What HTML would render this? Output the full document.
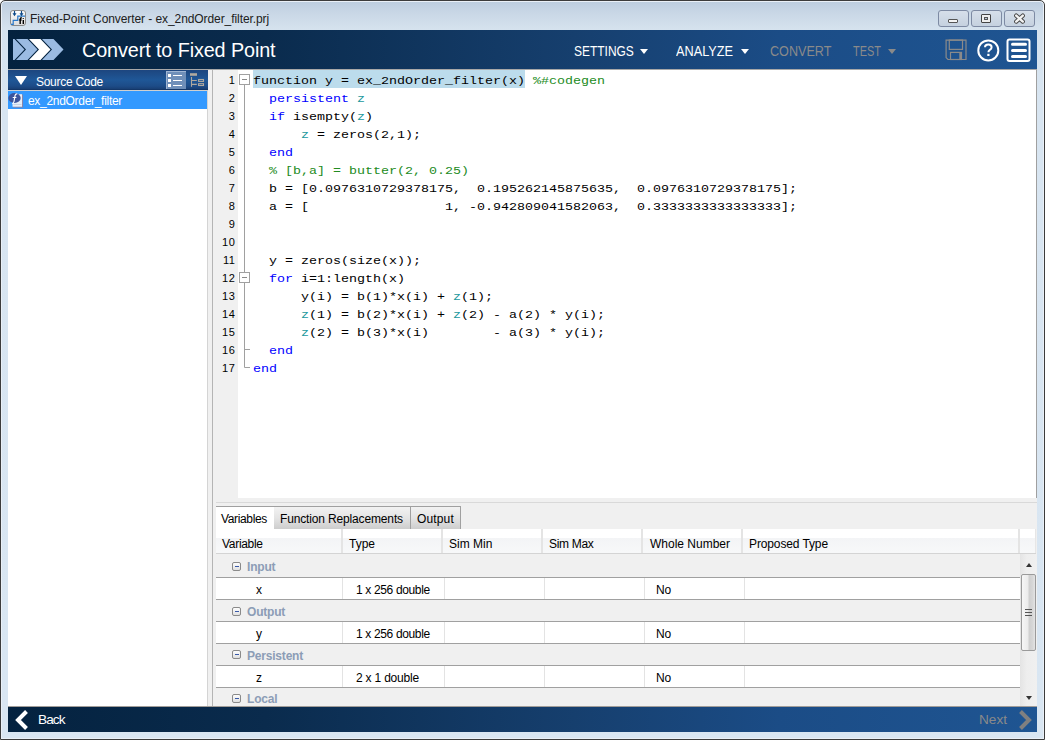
<!DOCTYPE html>
<html><head><meta charset="utf-8">
<style>
*{margin:0;padding:0;box-sizing:border-box}
html,body{width:1045px;height:740px;overflow:hidden;background:#fff}
body{position:relative;font-family:"Liberation Sans",sans-serif}
.a{position:absolute}
#frame{left:0;top:0;width:1045px;height:740px;border:1px solid #3c3c3c;border-radius:5px 5px 0 0;
 background:linear-gradient(#bccddf 0px,#c9d7e6 12px,#d5e2ee 28px,#d8e5f1 100px,#d9e6f2 740px);box-shadow:inset 0 0 0 1px #eaf0f7}
#title{left:30px;top:12px;font-size:12px;color:#202020;letter-spacing:-0.08px;white-space:nowrap}
.wb{top:10px;width:31px;height:17px;border:1px solid #7d8aa3;border-radius:3px;background:linear-gradient(#d6dfea,#c5d1df)}
#header{left:8px;top:30px;width:1029px;height:39px;background:linear-gradient(90deg,#04223f 0%,#0a2b4d 25%,#163f6e 55%,#1b4c86 75%,#1f5592 100%)}
#hdrtitle{left:82px;top:38.5px;font-size:19.8px;color:#fff;white-space:nowrap;letter-spacing:-0.1px}
.menu{top:42.6px;font-size:14px;color:#fff;white-space:nowrap;transform-origin:0 0}
.menu.dis{color:#8a8a8a}
.tri{width:0;height:0;border-left:4px solid transparent;border-right:4px solid transparent;border-top:5px solid #fff}
#hline{left:8px;top:69px;width:1029px;height:1px;background:#a8a8a8}
#left{left:8px;top:70px;width:200px;height:636px;background:#fff;border-right:1px solid #d4d4d4}
#srchdr{left:8px;top:70px;width:200px;height:20px;background:linear-gradient(#1d467f 0%,#1f5797 50%,#1d4c88 80%,#183f74 95%,#0f2f5e 100%)}
#selrow{left:8px;top:91px;width:199px;height:18px;background:#3399ff}
#split{left:208px;top:70px;width:5px;height:636px;background:#f0f0f0}
#gutter{left:212px;top:70px;width:26px;height:428px;background:#f0f0f0;border-left:1px solid #b4b4b4}
#editor{left:238px;top:70px;width:799px;height:428px;background:#fff;border-right:1px solid #a0a0a0}
#code{left:253px;top:72px;font-family:"Liberation Mono",monospace;font-size:11.5px;letter-spacing:0px;transform:scaleX(1.15942);transform-origin:0 0;line-height:18px;white-space:pre;color:#000}
#nums{left:213px;top:71px;width:22.5px;font-family:"Liberation Sans",sans-serif;font-size:11px;line-height:18px;text-align:right;color:#000;letter-spacing:0.6px}
.kw{color:#0000ff}.vr{color:#20999d}.cm{color:#228b22}
#hl{left:253px;top:70px;width:272px;height:18px;background:#bcdcec}
#footer{left:8px;top:706px;width:1029px;height:26px;border-top:1px solid #a19d99;background:linear-gradient(90deg,#04223f 0%,#0a2b4d 25%,#163f6e 55%,#1b4c86 75%,#1f5592 100%)}

.tab{top:506px;height:23px;font-size:12px;color:#000;letter-spacing:-0.3px;white-space:nowrap;padding:5px 0 0 5px;border-top:1px solid #a0a0a0;border-right:1px solid #a0a0a0;background:linear-gradient(#f2f2f2,#e4e4e4 50%,#cdcdcd)}
.tab.sel{background:#fff;border-right:0}
.th{top:529px;height:24px;font-size:12px;color:#000;letter-spacing:0px;white-space:nowrap;padding:8px 0 0 6px;background:linear-gradient(#fff 0,#fff 9px,#f3f4f6 9px,#f7f8f9 23px);border-right:2px solid #e4e4e4}
.grp{left:216px;width:804px;height:22px;background:#f0f0f0;border-bottom:1px solid #a0a0a0;font-size:12px;font-weight:bold;color:#8c9db6;padding:6px 0 0 31px;letter-spacing:-0.2px}
.mb{position:absolute;left:16px;top:8px;width:9px;height:9px;border:1px solid #8a8a8a;border-radius:2px;background:linear-gradient(#fdfdfd,#e0e0e0)}
.mb:after{content:"";position:absolute;left:1.5px;top:3px;width:4px;height:1px;background:#3a5aa8}
.row{left:216px;width:804px;height:22px;background:#fff;border-bottom:1px solid #a0a0a0;display:flex}
.c{height:21px;font-size:12px;color:#000;padding-top:4.5px;border-right:1px solid #e3e3e3;white-space:nowrap;letter-spacing:-0.2px}
</style></head><body>
<div id="frame" class="a"></div>
<div id="title" class="a">Fixed-Point Converter - ex_2ndOrder_filter.prj</div>
<div class="a wb" style="left:938px"></div>
<div class="a wb" style="left:971px"></div>
<div class="a wb" style="left:1004px"></div>

<div id="header" class="a"></div>
<div id="hdrtitle" class="a">Convert to Fixed Point</div>
<div class="a menu" style="left:574px;transform:scaleX(0.855)">SETTINGS</div>
<div class="a menu" style="left:676px;transform:scaleX(0.91)">ANALYZE</div>
<div class="a menu dis" style="left:770px;transform:scaleX(0.9)">CONVERT</div>
<div class="a menu dis" style="left:853px;transform:scaleX(0.78)">TEST</div>
<div id="hline" class="a"></div>

<div id="left" class="a"></div>
<div id="srchdr" class="a"></div>
<div id="selrow" class="a"></div>
<div id="split" class="a"></div>
<div id="gutter" class="a"></div>
<div id="editor" class="a"></div>
<div id="hl" class="a"></div>
<div id="code" class="a">function y = ex_2ndOrder_filter(x) <span class="cm">%#codegen</span>
  <span class="kw">persistent</span> <span class="vr">z</span>
  <span class="kw">if</span> isempty(<span class="vr">z</span>)
      <span class="vr">z</span> = zeros(2,1);
  <span class="kw">end</span>
  <span class="cm">% [b,a] = butter(2, 0.25)</span>
  b = [0.0976310729378175,  0.195262145875635,  0.0976310729378175];
  a = [                 1, -0.942809041582063,  0.3333333333333333];


  y = zeros(size(x));
  <span class="kw">for</span> i=1:length(x)
      y(i) = b(1)*x(i) + <span class="vr">z</span>(1);
      <span class="vr">z</span>(1) = b(2)*x(i) + <span class="vr">z</span>(2) - a(2) * y(i);
      <span class="vr">z</span>(2) = b(3)*x(i)        - a(3) * y(i);
  <span class="kw">end</span>
<span class="kw">end</span></div>
<div id="nums" class="a">1<br>2<br>3<br>4<br>5<br>6<br>7<br>8<br>9<br>10<br>11<br>12<br>13<br>14<br>15<br>16<br>17</div>
<svg class="a" style="left:238px;top:70px" width="15" height="310">
<path d="M6.5 15V297.5H12M6.5 279.5H12" stroke="#a0a0a0" fill="none"/>
<rect x="1.5" y="4.5" width="10" height="10" fill="#fff" stroke="#a0a0a0"/>
<path d="M4 9.5H9" stroke="#8a8a8a"/>
<rect x="1.5" y="202.5" width="10" height="10" fill="#fff" stroke="#a0a0a0"/>
<path d="M4 207.5H9" stroke="#8a8a8a"/>
</svg>
<div id="footer" class="a"></div>

<!-- title icon -->
<svg class="a" style="left:10px;top:10px" width="16" height="16">
<defs><linearGradient id="ig" x1="0" y1="0" x2="0" y2="1"><stop offset="0" stop-color="#ffffff"/><stop offset="1" stop-color="#dcdcdc"/></linearGradient></defs>
<rect x="0.5" y="0.5" width="15" height="15" rx="2.5" fill="url(#ig)" stroke="#8a8a8a"/>
<path d="M1 14.3H3.2V10.3H7.8V6.2H15" stroke="#2a78c8" stroke-width="1.2" fill="none"/>
<path d="M4.5 1V4M11.5 1V4" stroke="#0d4a8a" stroke-width="1.2"/><path d="M2.5 3.3H6.5L4.5 6.3ZM9.5 3.3H13.5L11.5 6.3Z" fill="#0d4a8a"/>
<path d="M10.2 14V9.2Q10.2 7.8 11.8 7.8M9.2 10H11.6M13.3 10V14M13.3 8.2V9" stroke="#000" stroke-width="1.4" fill="none"/>
</svg>
<!-- window buttons glyphs -->
<div class="a" style="left:948px;top:19px;width:10px;height:4px;background:#f4f4f4;border:1px solid #555;border-radius:1px"></div>
<div class="a" style="left:981px;top:14px;width:10px;height:9px;background:#eee;border:1px solid #444;border-radius:1px"></div>
<div class="a" style="left:984px;top:17px;width:4px;height:3px;background:#b9c6d6;border:1px solid #555"></div>
<svg class="a" style="left:1013px;top:13px" width="13" height="11"><path d="M3.2 2.6L9.8 8.6M9.8 2.6L3.2 8.6" stroke="#454545" stroke-width="4.2" stroke-linecap="round"/><path d="M3.2 2.6L9.8 8.6M9.8 2.6L3.2 8.6" stroke="#f2f2f2" stroke-width="2.4" stroke-linecap="round"/></svg>

<!-- header logo -->
<svg class="a" style="left:8px;top:30px" width="60" height="39">
<g transform="translate(-8,-30)">
<polygon points="13,39 14.5,39 24.5,49.5 14.5,60 13,60" fill="#9bbbe2"/>
<polygon points="16,39 27.5,39 37.5,49.5 27.5,60 16,60 26,49.5" fill="#9bbbe2"/>
<polygon points="29,39 40.5,39 50.5,49.5 40.5,60 29,60 39,49.5" fill="#ffffff"/>
<polygon points="42,39 53.5,39 63.5,49.5 53.5,60 42,60 52,49.5" fill="#9bbbe2"/>
</g></svg>
<div class="a tri" style="left:640px;top:49px"></div>
<div class="a tri" style="left:741px;top:49px"></div>
<div class="a tri" style="left:888px;top:49px;border-top-color:#8a8a8a"></div>
<!-- save icon -->
<svg class="a" style="left:945px;top:39px" width="23" height="23">
<path d="M1.1 1.1H21V20.5H3L1.1 18.6Z" fill="none" stroke="#8a8a8a" stroke-width="1.2"/>
<rect x="4.3" y="1.1" width="13.2" height="9.3" fill="none" stroke="#8a8a8a" stroke-width="1.2"/>
<rect x="5.5" y="13.4" width="11" height="7.1" fill="none" stroke="#8a8a8a" stroke-width="1.2"/>
<rect x="14.3" y="13.4" width="2.2" height="7.1" fill="#8a8a8a"/>
</svg>
<!-- help -->
<svg class="a" style="left:976px;top:38px" width="26" height="26">
<circle cx="12.3" cy="12.4" r="10" fill="none" stroke="#fff" stroke-width="2"/>
<path d="M9 9.3Q9 6.6 12.3 6.6Q15.6 6.6 15.6 9.2Q15.6 10.8 13.8 11.8Q12.4 12.6 12.4 14.3" stroke="#fff" stroke-width="2" fill="none"/><rect x="11.3" y="15.8" width="2.2" height="2.2" fill="#fff"/>
</svg>
<!-- menu -->
<svg class="a" style="left:1006px;top:38px" width="26" height="25">
<rect x="1.5" y="1.5" width="22" height="21.5" rx="2" fill="none" stroke="#fff" stroke-width="2"/>
<path d="M6.5 6.3H19.5M6.5 12.4H19.5M6.5 18.6H19.5" stroke="#fff" stroke-width="3" stroke-linecap="round"/>
</svg>

<!-- left panel header -->
<div class="a" style="left:15px;top:76px;width:0;height:0;border-left:6px solid transparent;border-right:6px solid transparent;border-top:9px solid #fff"></div>
<div class="a" style="left:36px;top:75px;font-size:12px;color:#fff;letter-spacing:-0.28px;white-space:nowrap">Source Code</div>
<div class="a" style="left:166px;top:71px;width:20px;height:18px;background:#6f8fb9;border-left:1px solid #9fb5d3;border-top:1px solid #9fb5d3"></div>
<svg class="a" style="left:166px;top:71px" width="20" height="18">
<rect x="2" y="3" width="3" height="3" fill="#fff"/><rect x="2" y="8" width="3" height="3" fill="#fff"/><rect x="2" y="13" width="3" height="3" fill="#fff"/>
<path d="M7 4.5H16M7 9.5H16M7 14.5H16" stroke="#fff" stroke-width="1"/>
</svg>
<svg class="a" style="left:189px;top:71px" width="17" height="18">
<rect x="1" y="2.2" width="7" height="2.6" fill="#b0a99f"/>
<path d="M2.5 6V15.8M2.5 9.5H7.8M2.5 13.4H7.8" stroke="#b0a99f" stroke-width="1.1" fill="none"/>
<rect x="9.6" y="8.5" width="4.9" height="1.9" fill="none" stroke="#b0a99f" stroke-width="1.1"/>
<rect x="9.6" y="12.7" width="4.9" height="1.8" fill="none" stroke="#b0a99f" stroke-width="1.1"/>
</svg>
<div class="a" style="left:8px;top:90px;width:200px;height:1px;background:#d0d0d0"></div>
<!-- selected row -->
<svg class="a" style="left:8px;top:91px" width="16" height="18">
<rect x="5" y="3.6" width="10" height="13" fill="#8a86a8"/>
<rect x="4.5" y="3.2" width="9.5" height="12.5" fill="#e6eef8"/>
<path d="M5.5 13.5H13.5" stroke="#c8d4e4" stroke-width="1"/>
<ellipse cx="6.5" cy="7" rx="6.2" ry="5.1" fill="#3d559c"/>
<path d="M4.2 12.5Q5.6 12.5 6 10.5L7.1 4.3Q7.5 2.6 9.3 2.8M4.7 6.5H8.4" stroke="#fff" stroke-width="1.2" fill="none"/>
</svg>
<div class="a" style="left:28px;top:94px;font-size:12px;color:#fff;letter-spacing:-0.3px;white-space:nowrap">ex_2ndOrder_filter</div>


<!-- bottom panel -->
<div class="a" style="left:213px;top:498px;width:824px;height:208px;background:#f0f0f0"></div><div class="a" style="left:212px;top:498px;width:1px;height:208px;background:#b4b4b4"></div>
<div class="a" style="left:216px;top:502px;width:821px;height:1px;background:#d9d9d9"></div>

<div class="a tab sel" style="left:216px;width:58px;letter-spacing:-0.35px">Variables</div>
<div class="a tab" style="left:274px;width:137px;letter-spacing:-0.15px;padding-left:6px">Function Replacements</div>
<div class="a tab" style="left:411px;width:50px;letter-spacing:0.15px;padding-left:6px">Output</div>
<div class="a th" style="left:216px;width:127px;letter-spacing:-0.3px">Variable</div>
<div class="a th" style="left:343px;width:100px">Type</div>
<div class="a th" style="left:443px;width:100px">Sim Min</div>
<div class="a th" style="left:543px;width:100px;letter-spacing:-0.3px">Sim Max</div>
<div class="a th" style="left:643px;width:100px;padding-left:7px">Whole Number</div>
<div class="a th" style="left:743px;width:277px;letter-spacing:-0.12px">Proposed Type</div>
<div class="a th" style="left:1020px;width:16px;border-right:1px solid #e6e6e6"></div>
<div class="a" style="left:216px;top:553px;width:820px;height:1px;background:#d4d4d4"></div>

<div class="a grp" style="top:554px;height:24px"><span class="mb"></span>Input</div>
<div class="a row" style="top:578px"><div class="c" style="width:127px;padding-left:40px">x</div><div class="c" style="width:102px;padding-left:13px;letter-spacing:-0.35px">1 x 256 double</div><div class="c" style="width:100px"></div><div class="c" style="width:100px"></div><div class="c" style="width:100px;padding-left:11px">No</div><div class="c" style="width:275px;border-right:0"></div></div>
<div class="a grp" style="top:600px;padding-top:5px"><span class="mb" style="top:7px"></span>Output</div>
<div class="a row" style="top:622px"><div class="c" style="width:127px;padding-left:40px">y</div><div class="c" style="width:102px;padding-left:13px;letter-spacing:-0.35px">1 x 256 double</div><div class="c" style="width:100px"></div><div class="c" style="width:100px"></div><div class="c" style="width:100px;padding-left:11px">No</div><div class="c" style="width:275px;border-right:0"></div></div>
<div class="a grp" style="top:644px;padding-top:5px"><span class="mb" style="top:6px"></span>Persistent</div>
<div class="a row" style="top:666px"><div class="c" style="width:127px;padding-left:40px">z</div><div class="c" style="width:102px;padding-left:13px">2 x 1 double</div><div class="c" style="width:100px"></div><div class="c" style="width:100px"></div><div class="c" style="width:100px;padding-left:11px">No</div><div class="c" style="width:275px;border-right:0"></div></div>
<div class="a grp" style="top:688px;height:18px;border-bottom:0;padding-top:4px"><span class="mb" style="top:6px"></span>Local</div>
<!-- scrollbar -->
<div class="a" style="left:1020px;top:554px;width:17px;height:152px;background:linear-gradient(90deg,#e4e4e4,#eeeeee 40%,#f0f0f0)"></div>
<div class="a" style="left:1026px;top:562.5px;width:0;height:0;border-left:3.5px solid transparent;border-right:3.5px solid transparent;border-bottom:4px solid #333"></div>
<div class="a" style="left:1026px;top:696px;width:0;height:0;border-left:3.5px solid transparent;border-right:3.5px solid transparent;border-top:4px solid #333"></div>
<div class="a" style="left:1021px;top:574px;width:15px;height:77px;border:1px solid #9a9a9a;border-radius:2px;background:linear-gradient(90deg,#f6f6f6 0%,#ebebeb 45%,#cfcfcf 55%,#d6d6d6 80%,#e4e4e4 100%)"></div>
<svg class="a" style="left:1024px;top:608px" width="9" height="9"><path d="M1 1.5H8M1 4.5H8M1 7.5H8" stroke="#555" stroke-width="1"/></svg>

<!-- footer -->
<svg class="a" style="left:14px;top:709px" width="16" height="22">
<path d="M12.5 2.5L4 11L12.5 19.5" stroke="#fff" stroke-width="4" fill="none"/>
</svg>
<div class="a" style="left:38px;top:712px;font-size:13.6px;color:#fff;letter-spacing:-0.9px">Back</div>
<div class="a" style="left:979px;top:712px;font-size:13.6px;color:#8a8a8a;letter-spacing:0px">Next</div>
<svg class="a" style="left:1017px;top:709px" width="16" height="22">
<path d="M3.5 2.5L12 11L3.5 19.5" stroke="#808080" stroke-width="4" fill="none"/>
</svg>
</body></html>
